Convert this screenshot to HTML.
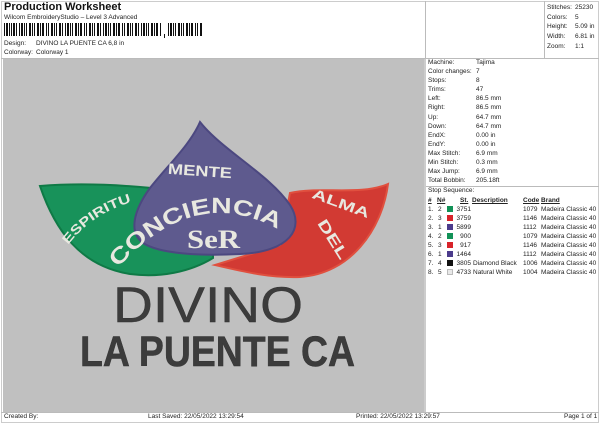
<!DOCTYPE html>
<html><head><meta charset="utf-8"><style>
*{margin:0;padding:0;box-sizing:border-box}
body{width:600px;height:424px;background:#fff;font-family:"Liberation Sans",Arial,sans-serif;color:#222;position:relative;overflow:hidden;font-size:6.5px}
.a{position:absolute;white-space:nowrap}
.bx{position:absolute;border:1px solid #bbb}
</style></head><body>
<div class="bx" style="left:1px;top:1px;width:598px;height:422px;border-color:#ccc"></div>
<div class="a" style="left:4px;top:1px;font-size:11px;font-weight:bold;color:#111">Production Worksheet</div>
<div class="a" style="left:4px;top:14px">Wilcom EmbroideryStudio – Level 3 Advanced</div>
<svg class="a" style="left:4px;top:23px" width="200" height="16">
<g fill="#111">
<rect x="0" y="0" width="1" height="13"/><rect x="2" y="0" width="2" height="13"/><rect x="5" y="0" width="1" height="13"/><rect x="7" y="0" width="1" height="13"/><rect x="9" y="0" width="2" height="13"/><rect x="12" y="0" width="1" height="13"/><rect x="15" y="0" width="1" height="13"/><rect x="17" y="0" width="2" height="13"/><rect x="20" y="0" width="1" height="13"/><rect x="22" y="0" width="1" height="13"/><rect x="25" y="0" width="2" height="13"/><rect x="28" y="0" width="1" height="13"/><rect x="30" y="0" width="1" height="13"/><rect x="33" y="0" width="2" height="13"/><rect x="36" y="0" width="1" height="13"/><rect x="38" y="0" width="2" height="13"/><rect x="42" y="0" width="1" height="13"/><rect x="44" y="0" width="1" height="13"/><rect x="47" y="0" width="2" height="13"/><rect x="50" y="0" width="1" height="13"/><rect x="52" y="0" width="1" height="13"/><rect x="55" y="0" width="2" height="13"/><rect x="58" y="0" width="1" height="13"/><rect x="61" y="0" width="1" height="13"/><rect x="63" y="0" width="2" height="13"/><rect x="66" y="0" width="1" height="13"/><rect x="68" y="0" width="1" height="13"/><rect x="71" y="0" width="2" height="13"/><rect x="74" y="0" width="1" height="13"/><rect x="76" y="0" width="2" height="13"/><rect x="80" y="0" width="1" height="13"/><rect x="82" y="0" width="1" height="13"/><rect x="85" y="0" width="2" height="13"/><rect x="88" y="0" width="1" height="13"/><rect x="90" y="0" width="1" height="13"/><rect x="93" y="0" width="2" height="13"/><rect x="96" y="0" width="1" height="13"/><rect x="99" y="0" width="1" height="13"/><rect x="101" y="0" width="2" height="13"/><rect x="104" y="0" width="1" height="13"/><rect x="106" y="0" width="1" height="13"/><rect x="109" y="0" width="2" height="13"/><rect x="112" y="0" width="1" height="13"/><rect x="114" y="0" width="2" height="13"/><rect x="118" y="0" width="1" height="13"/><rect x="120" y="0" width="1" height="13"/><rect x="123" y="0" width="2" height="13"/><rect x="126" y="0" width="1" height="13"/><rect x="128" y="0" width="1" height="13"/><rect x="131" y="0" width="2" height="13"/><rect x="134" y="0" width="1" height="13"/><rect x="137" y="0" width="1" height="13"/><rect x="139" y="0" width="2" height="13"/><rect x="142" y="0" width="1" height="13"/><rect x="144" y="0" width="1" height="13"/><rect x="147" y="0" width="2" height="13"/><rect x="150" y="0" width="1" height="13"/><rect x="152" y="0" width="2" height="13"/><rect x="156" y="0" width="1" height="13"/>
<rect x="160" y="11" width="1" height="4"/>
<rect x="164" y="0" width="1" height="13"/><rect x="166" y="0" width="2" height="13"/><rect x="169" y="0" width="1" height="13"/><rect x="171" y="0" width="1" height="13"/><rect x="174" y="0" width="2" height="13"/><rect x="177" y="0" width="1" height="13"/><rect x="179" y="0" width="1" height="13"/><rect x="182" y="0" width="2" height="13"/><rect x="185" y="0" width="1" height="13"/><rect x="187" y="0" width="2" height="13"/><rect x="191" y="0" width="1" height="13"/><rect x="193" y="0" width="1" height="13"/><rect x="196" y="0" width="2" height="13"/>
</g></svg>
<div class="a" style="left:4px;top:40px">Design:</div><div class="a" style="left:36px;top:40px">DIVINO LA PUENTE CA 6,8 in</div>
<div class="a" style="left:4px;top:49px">Colorway:</div><div class="a" style="left:36px;top:49px">Colorway 1</div>
<div class="bx" style="left:425px;top:1px;width:1px;height:58px;border-width:0 0 0 1px"></div>
<div class="bx" style="left:1px;top:58px;width:598px;height:1px;border-width:1px 0 0 0"></div>
<div class="a" style="left:547px;top:3px;line-height:9.7px">Stitches:<br>Colors:<br>Height:<br>Width:<br>Zoom:</div>
<div class="a" style="left:575px;top:3px;line-height:9.7px">25230<br>5<br>5.09 in<br>6.81 in<br>1:1</div>
<div class="bx" style="left:544px;top:1px;width:1px;height:58px;border-width:0 0 0 1px"></div>

<svg class="a" style="left:3px;top:59px" width="421" height="353" viewBox="3 59 421 353">
<rect x="3" y="59" width="421" height="353" fill="#c0c0c0"/>
<path d="M40 186 C90 182 150 186 213 196 L213 258 C190 272 160 278 130 274 C80 266 55 230 40 186 Z" fill="#18925a" stroke="#0f7a46" stroke-width="2"/>
<path d="M290 193 C320 186 360 196 388 184 C382 230 350 274 300 277 C270 278 245 272 215 265 L280 245 Z" fill="#d23a33" stroke="#e0503f" stroke-width="2"/>
<path d="M200 122 C222 150 270 175 290 205 C305 228 290 252 240 254 C200 256 160 254 143 243 C128 232 134 210 150 188 C168 165 190 145 200 122 Z" fill="#5e5a8e" stroke="#4c4880" stroke-width="2"/>
<defs><path id="arc" d="M118 268 Q200 176 292 238"/><path id="arc2" d="M68 245 Q95 210 140 200"/></defs>
<g fill="#e8e8e0" font-family="Liberation Sans, sans-serif" font-weight="bold">
<text x="168" y="176" font-size="15" transform="rotate(4 200 170)" textLength="64" lengthAdjust="spacingAndGlyphs">MENTE</text>
<text font-size="13"><textPath href="#arc2" textLength="78" lengthAdjust="spacingAndGlyphs">ESPIRITU</textPath></text>
<text font-size="22"><textPath href="#arc" textLength="180" lengthAdjust="spacingAndGlyphs">CONCIENCIA</textPath></text>
<text x="187" y="248" font-size="26" font-family="Liberation Serif, serif" textLength="53" lengthAdjust="spacingAndGlyphs">SeR</text>
<text x="310" y="208" font-size="14" transform="rotate(20 340 206)" textLength="60" lengthAdjust="spacingAndGlyphs">ALMA</text>
<text x="300" y="236" font-size="15" transform="rotate(58 320 245)" textLength="44" lengthAdjust="spacingAndGlyphs">DEL</text>
</g>
<text x="113" y="322" font-size="50" fill="#3c3c3c" stroke="#333" stroke-width="0.4" textLength="190" lengthAdjust="spacingAndGlyphs" font-family="Liberation Sans, sans-serif">DIVINO</text>
<text x="80" y="366" font-size="43" fill="#3c3c3c" stroke="#333" stroke-width="0.5" font-weight="bold" textLength="275" lengthAdjust="spacingAndGlyphs" font-family="Liberation Sans, sans-serif">LA PUENTE CA</text>
</svg>
<div class="bx" style="left:424px;top:59px;width:2px;height:353px;border:0;background:#ccc"></div>

<div class="a" style="left:428px;top:58px;line-height:9.1px">Machine:<br>Color changes:<br>Stops:<br>Trims:<br>Left:<br>Right:<br>Up:<br>Down:<br>EndX:<br>EndY:<br>Max Stitch:<br>Min Stitch:<br>Max Jump:<br>Total Bobbin:</div>
<div class="a" style="left:476px;top:58px;line-height:9.1px">Tajima<br>7<br>8<br>47<br>86.5 mm<br>86.5 mm<br>64.7 mm<br>64.7 mm<br>0.00 in<br>0.00 in<br>6.9 mm<br>0.3 mm<br>6.9 mm<br>205.18ft</div>
<div class="bx" style="left:426px;top:186px;width:173px;height:1px;border-width:1px 0 0 0"></div>
<div class="a" style="left:428px;top:187px">Stop Sequence:</div>
<div style="position:absolute;left:428px;top:196px;line-height:9px;font-size:6.5px">
<div class="a" style="left:0;top:0;font-weight:bold;text-decoration:underline">#</div>
<div class="a" style="left:9px;top:0;font-weight:bold;text-decoration:underline">N#</div>
<div class="a" style="left:32px;top:0;font-weight:bold;text-decoration:underline">St.</div>
<div class="a" style="left:44px;top:0;font-weight:bold;text-decoration:underline">Description</div>
<div class="a" style="left:95px;top:0;font-weight:bold;text-decoration:underline">Code</div>
<div class="a" style="left:113px;top:0;font-weight:bold;text-decoration:underline">Brand</div>
<div class="a" style="left:0;top:9px;line-height:9px">1.<br>2.<br>3.<br>4.<br>5.<br>6.<br>7.<br>8.</div>
<div class="a" style="left:10px;top:9px;line-height:9px">2<br>3<br>1<br>2<br>3<br>1<br>4<br>5</div>
<div class="a" style="left:19px;top:10px;width:6px;height:6px;background:#129257"></div>
<div class="a" style="left:19px;top:19px;width:6px;height:6px;background:#d8232a"></div>
<div class="a" style="left:19px;top:28px;width:6px;height:6px;background:#4b3b8c"></div>
<div class="a" style="left:19px;top:37px;width:6px;height:6px;background:#129257"></div>
<div class="a" style="left:19px;top:46px;width:6px;height:6px;background:#d8232a"></div>
<div class="a" style="left:19px;top:55px;width:6px;height:6px;background:#4b3b8c"></div>
<div class="a" style="left:19px;top:64px;width:6px;height:6px;background:#111"></div>
<div class="a" style="left:19px;top:73px;width:6px;height:6px;background:#e8e8e8;border:1px solid #bbb"></div>
<div class="a" style="left:27px;top:9px;width:16px;text-align:right;line-height:9px">3751<br>3759<br>5899<br>900<br>917<br>1464<br>3805<br>4733</div>
<div class="a" style="left:45px;top:9px;line-height:9px"><br><br><br><br><br><br>Diamond Black<br>Natural White</div>
<div class="a" style="left:95px;top:9px;line-height:9px">1079<br>1146<br>1112<br>1079<br>1146<br>1112<br>1006<br>1004</div>
<div class="a" style="left:113px;top:9px;line-height:9px">Madeira Classic 40<br>Madeira Classic 40<br>Madeira Classic 40<br>Madeira Classic 40<br>Madeira Classic 40<br>Madeira Classic 40<br>Madeira Classic 40<br>Madeira Classic 40</div>
</div>
<div class="bx" style="left:1px;top:412px;width:598px;height:1px;border-width:1px 0 0 0"></div>
<div class="a" style="left:4px;top:413px">Created By:</div>
<div class="a" style="left:148px;top:413px">Last Saved: 22/05/2022 13:29:54</div>
<div class="a" style="left:356px;top:413px">Printed: 22/05/2022 13:29:57</div>
<div class="a" style="left:564px;top:413px">Page 1 of 1</div>
</body></html>
